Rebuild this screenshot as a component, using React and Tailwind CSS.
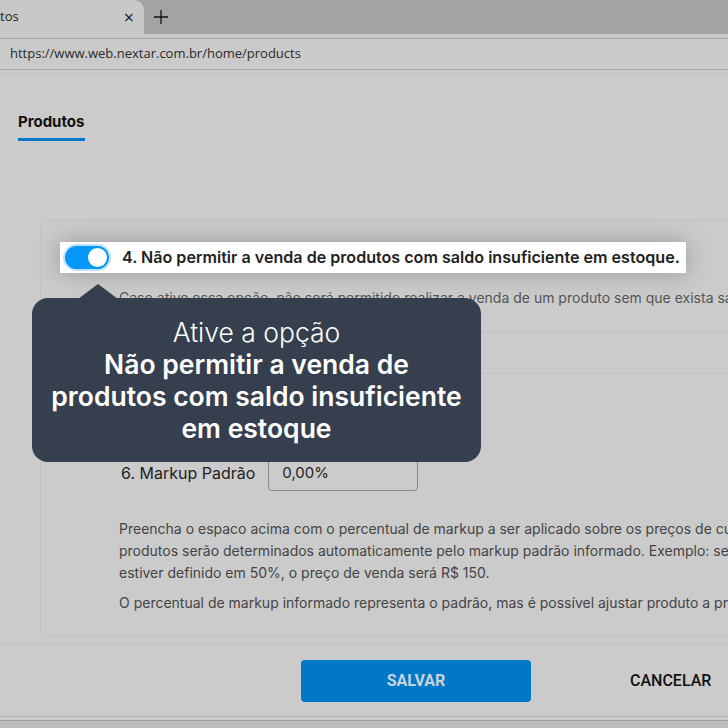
import React from 'react';

function Toggle() {
  return (
    <div className="w-[44px] h-[23px] rounded-full bg-[#0797f8] ring-2 ring-[#bfe2fd] flex items-center justify-end pr-[2px]">
      <div className="w-[19px] h-[19px] rounded-full bg-white" />
    </div>
  );
}

export default function App() {
  return (
    <div className="relative w-[728px] h-[728px] overflow-hidden bg-[#cbcbcb] flex flex-col font-['Inter',sans-serif]">
      {/* browser tabs */}
      <div className="h-[34px] bg-[#a3a3a3] flex items-stretch shrink-0">
        <div className="w-[144px] bg-[#c8c8c8] rounded-tr-[10px] flex items-center justify-between pr-[10px] font-['Open_Sans',sans-serif] text-[13px] text-[#222]">
          <span>tos</span>
          <span className="text-[18px] leading-none text-[#222]">×</span>
        </div>
        <div className="w-[34px] flex items-center justify-center">
          <svg width="16" height="16" viewBox="0 0 16 16" fill="none" stroke="#111" strokeWidth="1.3">
            <path d="M8 1v14M1 8h14" />
          </svg>
        </div>
      </div>
      <div className="h-[4px] bg-[#c8c8c8] shrink-0" />
      <div className="h-[32px] bg-[#cacaca] border-t border-b border-[#a6a6a6] flex items-center px-[10px] font-['Open_Sans',sans-serif] text-[13px] text-[#2a2a2a] shrink-0">
        https://www.web.nextar.com.br/home/products
      </div>
      <div className="h-[4px] border-b border-[#c0c0c0] shrink-0" />

      {/* page title tab */}
      <div className="pl-[18px] pt-[35px] shrink-0">
        <div className="inline-block border-b-[3px] border-[#0077c8] pb-[5px] pr-[1px] text-[15px] leading-[22px] font-bold text-[#111]">
          Produtos
        </div>
      </div>

      {/* settings panel */}
      <div className="ml-[40px] mt-[79px] w-[720px] h-[417px] border border-[#c2c2c2] rounded-[6px] shrink-0">
        <div className="pt-[21px] pl-[19px]">
          <div className="relative z-10 inline-flex items-center gap-[13px] bg-white pl-[5px] pr-[6px] h-[31px] shadow-[0_0_24px_rgba(0,0,0,0.25)]">
            <Toggle />
            <span className="text-[16.1px] font-semibold text-[#222] whitespace-nowrap">
              4. Não permitir a venda de produtos com saldo insuficiente em estoque.
            </span>
          </div>
        </div>
        <div className="pl-[78px] pt-[14px] text-[14px] text-[#555] whitespace-nowrap">
          Caso ative essa opção, não será permitido realizar a venda de um produto sem que exista saldo em estoque.
        </div>
        <div className="mt-[24px] border-t border-[#c2c2c2]" />
        <div className="h-[40px]" />
        <div className="border-t border-[#c2c2c2]" />

        <div className="pl-[80px] pt-[81px] flex items-center gap-[13px]">
          <span className="text-[16px] text-[#222]">6. Markup Padrão</span>
          <div className="w-[150px] h-[36px] border border-[#8a8a8a] rounded-[4px] flex items-center px-[13px] text-[15px] text-[#222]">
            0,00%
          </div>
        </div>
        <div className="pl-[78px] pt-[27px] text-[14px] leading-[22px] text-[#444] whitespace-nowrap">
          <p>Preencha o espaco acima com o percentual de markup a ser aplicado sobre os preços de custo dos seus</p>
          <p>produtos serão determinados automaticamente pelo markup padrão informado. Exemplo: se o custo for</p>
          <p>estiver definido em 50%, o preço de venda será R$ 150.</p>
          <p className="mt-[8px]">O percentual de markup informado representa o padrão, mas é possível ajustar produto a produto.</p>
        </div>
      </div>

      {/* footer */}
      <div className="mt-[6px] border-t border-[#c4c4c4] flex-1 flex flex-col">
        <div className="flex items-center pt-[16px] pl-[301px] gap-[99px] font-['Roboto',sans-serif]">
          <button className="w-[230px] h-[42px] rounded-[4px] bg-[#0078c8] text-[16px] font-bold text-[#c9d3dc]">
            SALVAR
          </button>
          <span className="text-[16px] font-medium text-[#111]">CANCELAR</span>
        </div>
        <div className="mt-[14px] h-[4px] border-t border-[#b0b0b0]" />
        <div className="flex-1 border-t border-[#9c9c9c] bg-[#bdbdbd]" />
      </div>

      {/* tooltip */}
      <div className="absolute left-[32px] top-[298px] w-[449px] h-[164px] z-20">
        <svg className="absolute left-[46px] top-[-14px]" width="40" height="15" viewBox="0 0 40 15">
          <path d="M0 15 L20 0 L40 15 Z" fill="#363f4e" />
        </svg>
        <div className="w-full h-full rounded-[16px] bg-[#363f4e] flex flex-col items-center justify-center text-white text-center text-[26.5px] leading-[32px]">
          <span className="font-light">Ative a opção</span>
          <span className="font-semibold">Não permitir a venda de</span>
          <span className="font-semibold">produtos com saldo insuficiente</span>
          <span className="font-semibold">em estoque</span>
        </div>
      </div>
    </div>
  );
}
